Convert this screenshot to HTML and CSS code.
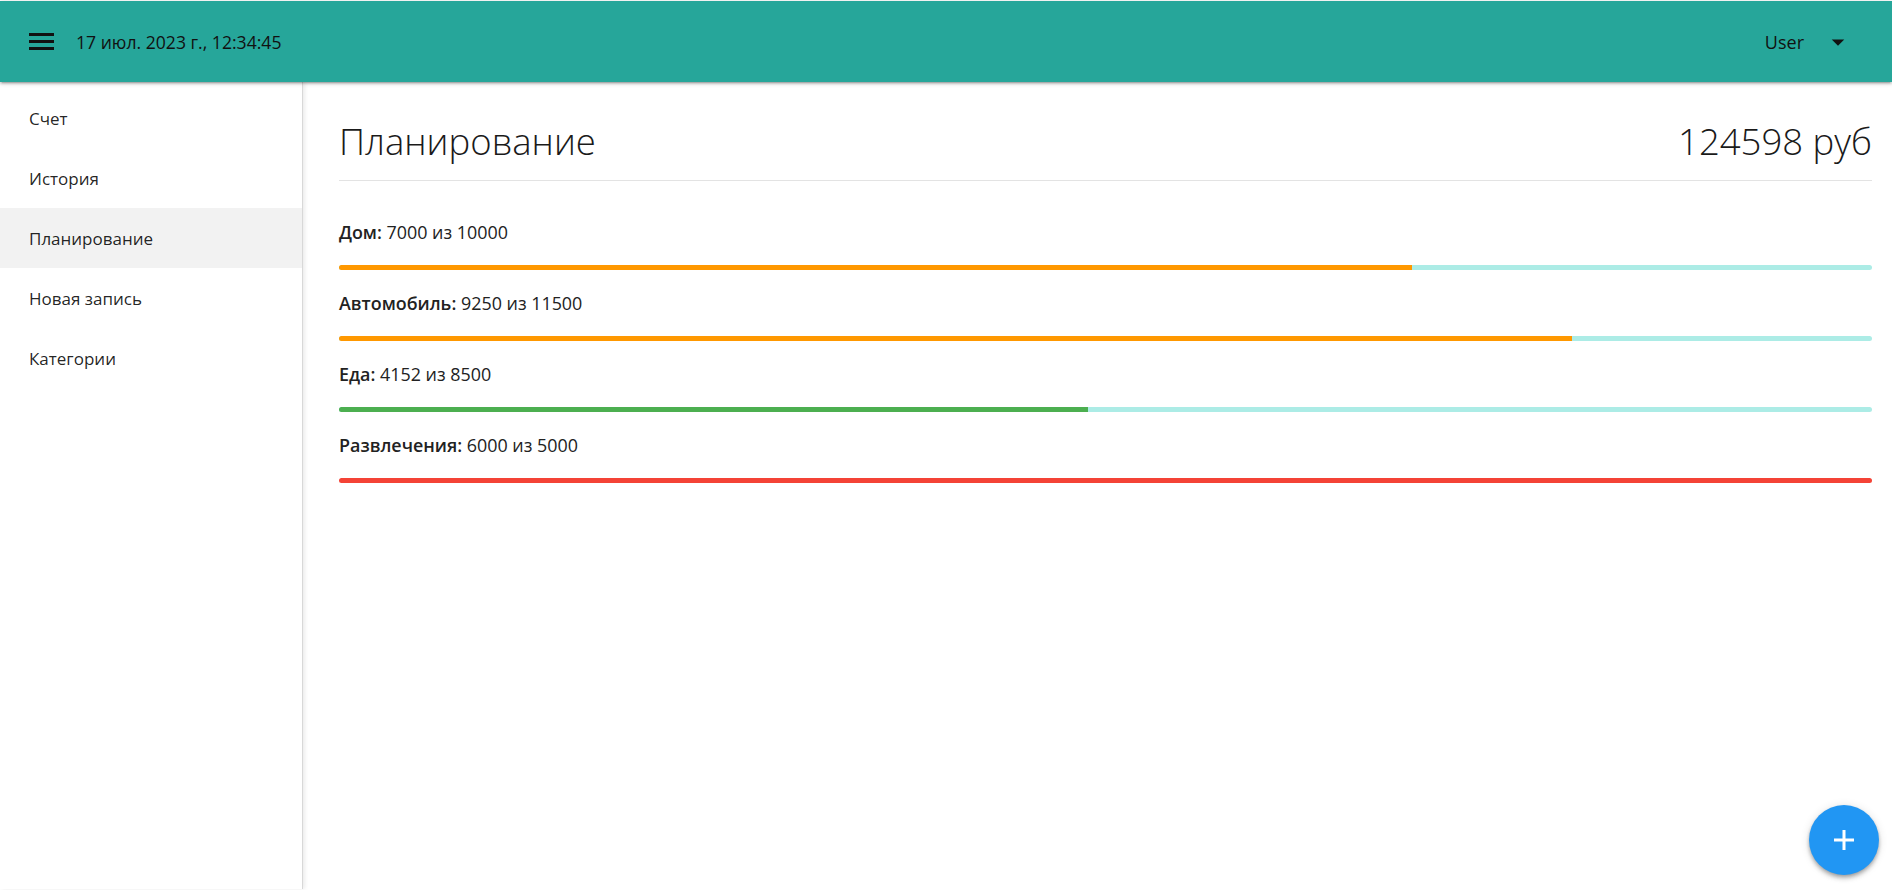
FILE: index.html
```html
<!DOCTYPE html>
<html lang="ru">
<head>
<meta charset="utf-8">
<title>Планирование</title>
<link rel="stylesheet" href="styles.css">
</head>
<body>
<header class="topbar">
  <div class="topbar-left">
    <svg class="menu-icon" width="25" height="17" viewBox="0 0 25 17" aria-hidden="true">
      <rect x="0" y="0" width="25" height="3" fill="#111"/>
      <rect x="0" y="7" width="25" height="3" fill="#111"/>
      <rect x="0" y="14" width="25" height="3" fill="#111"/>
    </svg>
    <span class="date">17 июл. 2023 г., 12:34:45</span>
  </div>
  <div class="topbar-right">
    <span class="user">User</span>
    <svg class="caret" width="30" height="30" viewBox="0 0 24 24" aria-hidden="true">
      <path d="M7 10l5 5 5-5z" fill="#111"/>
    </svg>
  </div>
</header>
<div class="layout">
  <nav class="sidenav">
    <a class="nav-item" href="#">Счет</a>
    <a class="nav-item" href="#">История</a>
    <a class="nav-item active" href="#">Планирование</a>
    <a class="nav-item" href="#">Новая запись</a>
    <a class="nav-item" href="#">Категории</a>
  </nav>
  <main class="content">
    <div class="page-title">
      <h1 class="title">Планирование</h1>
      <div class="balance">124598 руб</div>
    </div>
    <section class="plans">
      <div class="plan">
        <div class="plan-label"><strong>Дом:</strong> 7000 из 10000</div>
        <div class="progress"><div class="bar bar-orange" style="width:70%"></div></div>
      </div>
      <div class="plan">
        <div class="plan-label"><strong>Автомобиль:</strong> 9250 из 11500</div>
        <div class="progress"><div class="bar bar-orange" style="width:80.43%"></div></div>
      </div>
      <div class="plan">
        <div class="plan-label"><strong>Еда:</strong> 4152 из 8500</div>
        <div class="progress"><div class="bar bar-green" style="width:48.85%"></div></div>
      </div>
      <div class="plan">
        <div class="plan-label"><strong>Развлечения:</strong> 6000 из 5000</div>
        <div class="progress"><div class="bar bar-red" style="width:100%"></div></div>
      </div>
    </section>
  </main>
</div>
<button class="fab" type="button" aria-label="Добавить">
  <svg width="20" height="20" viewBox="0 0 20 20" aria-hidden="true">
    <rect x="0" y="8.5" width="20" height="3" fill="#fff"/>
    <rect x="8.5" y="0" width="3" height="20" fill="#fff"/>
  </svg>
</button>
</body>
</html>
```
FILE: styles.css
```css
* { box-sizing: border-box; }
html, body { height: 100%; }
body {
  margin: 0;
  padding-top: 1px;
  background: #fff;
  font-family: "Open Sans", "Noto Sans", sans-serif;
  color: rgba(0,0,0,0.87);
  overflow: hidden;
}
.topbar {
  position: relative;
  z-index: 3;
  height: 81px;
  background: #26a69a;
  display: flex;
  align-items: center;
  justify-content: space-between;
  padding: 0 39px 0 29px;
  box-shadow: 0 2px 2px 0 rgba(0,0,0,0.14), 0 3px 1px -2px rgba(0,0,0,0.12), 0 1px 5px 0 rgba(0,0,0,0.2);
}
.topbar-left { display: flex; align-items: center; }
.menu-icon { display: block; margin-right: 22px; }
.date { font-size: 17.6px; color: #111; }
.topbar-right { display: flex; align-items: center; }
.user { font-size: 18px; color: #111; margin-right: 19px; }
.caret { display: block; }
.layout {
  display: flex;
  height: calc(100% - 82px);
}
.sidenav {
  position: relative;
  z-index: 2;
  width: 303px;
  flex: none;
  padding-top: 6px;
  border-right: 1px solid #d8d8d8;
  box-shadow: 2px 0 4px rgba(0,0,0,0.08);
  display: flex;
  flex-direction: column;
}
.nav-item {
  display: flex;
  align-items: center;
  height: 60px;
  padding-left: 29px;
  font-size: 17px;
  color: rgba(0,0,0,0.87);
  text-decoration: none;
}
.nav-item.active { background: #f2f2f2; }
.content {
  flex: 1;
  padding: 41px 20px 0 36px;
}
.page-title {
  display: flex;
  justify-content: space-between;
  align-items: flex-start;
  padding-bottom: 20px;
  border-bottom: 1px solid #e3e3e3;
}
.title, .balance {
  margin: 0;
  font-size: 36.5px;
  font-weight: 300;
  line-height: 37px;
  color: #1a1a1a;
}
.plans { padding-top: 42px; }
.plan { margin-bottom: 24px; }
.plan-label {
  font-size: 17.9px;
  line-height: 18px;
  margin-bottom: 24px;
  color: #222;
}
.plan-label strong { font-weight: 600; }
.progress {
  height: 5px;
  background: #acece6;
  border-radius: 3px;
  overflow: hidden;
}
.bar { height: 100%; }
.bar-orange { background: #ff9800; }
.bar-green { background: #4caf50; }
.bar-red { background: #f44336; }
.fab {
  position: fixed;
  right: 13px;
  bottom: 15px;
  width: 70px;
  height: 70px;
  border-radius: 50%;
  border: none;
  background: #2196f3;
  display: flex;
  align-items: center;
  justify-content: center;
  padding: 0;
  box-shadow: 0 4px 5px 0 rgba(0,0,0,0.14), 0 1px 10px 0 rgba(0,0,0,0.12), 0 2px 4px -1px rgba(0,0,0,0.3);
  cursor: pointer;
}
.fab svg { display: block; }
```
